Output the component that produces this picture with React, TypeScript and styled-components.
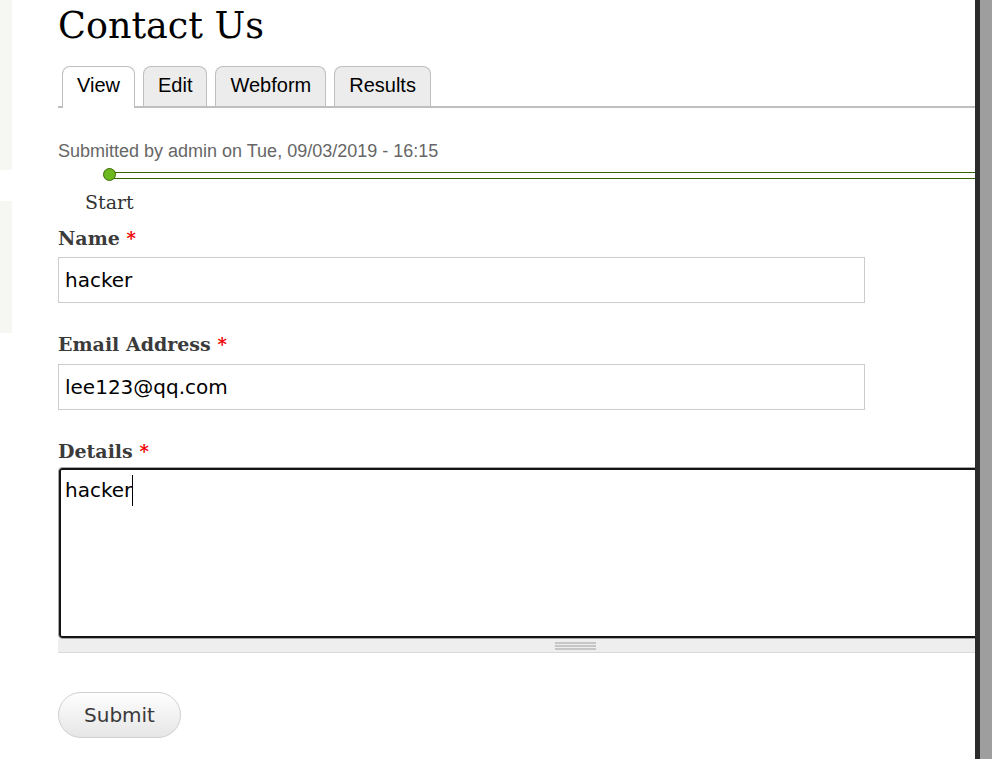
import styled, { createGlobalStyle } from "styled-components";

const GlobalStyle = createGlobalStyle`
  html, body {
    margin: 0;
    padding: 0;
    background: #fff;
    overflow: hidden;
  }
`;

const serif = `"DejaVu Serif", "Liberation Serif", serif`;
const sans = `"DejaVu Sans", "Noto Sans", sans-serif`;
const arial = `"Liberation Sans", Arial, sans-serif`;

const Root = styled.div`
  display: flex;
  height: 759px;
  overflow: hidden;
`;

const LeftRail = styled.aside`
  width: 12px;
  flex-shrink: 0;
  display: flex;
  flex-direction: column;
`;

const RailPanel = styled.div<{ $height: number; $offset?: number }>`
  height: ${({ $height }) => $height}px;
  margin-top: ${({ $offset = 0 }) => $offset}px;
  background: #f6f6f2;
`;

const Main = styled.main`
  flex: 1;
  min-width: 0;
  padding-left: 46px;
  overflow: hidden;
`;

const RightEdge = styled.div`
  display: flex;
  flex-shrink: 0;
`;

const EdgeDark = styled.div`
  width: 5px;
  background: #2b2b2b;
`;

const EdgeLight = styled.div`
  width: 12px;
  background: #9e9e9e;
`;

const Title = styled.h1`
  margin: 4px 0 0;
  font-family: ${serif};
  font-weight: normal;
  font-size: 36.5px;
  line-height: 44px;
  color: #000;
`;

const TabList = styled.ul`
  display: flex;
  align-items: flex-end;
  margin: 18px 0 0;
  padding: 0;
  list-style: none;
  border-bottom: 2px solid #bfbfbf;
`;

const Tab = styled.li<{ $active?: boolean }>`
  margin: 0 4px ${({ $active }) => ($active ? "-2px" : "0")};
  padding: 7px 14px ${({ $active }) => ($active ? "12px" : "10px")};
  border: 1px solid #bfbfbf;
  border-bottom: none;
  border-radius: 8px 8px 0 0;
  background: ${({ $active }) => ($active ? "#fff" : "#ececec")};
  font-family: ${arial};
  font-size: 20px;
  line-height: 22px;
  color: #000;
`;

const Submitted = styled.div`
  margin-top: 31px;
  font-family: ${arial};
  font-size: 18px;
  line-height: 24px;
  color: #666;
`;

const Progress = styled.div`
  position: relative;
  box-sizing: border-box;
  height: 13px;
  margin-top: 5px;
  padding: 4px 0 0 52px;
`;

const ProgressBar = styled.div`
  height: 5px;
  border-top: 1px solid #336600;
  border-bottom: 1px solid #336600;
  background: #fff;
`;

const ProgressDot = styled.span`
  position: absolute;
  top: 0;
  left: 45px;
  width: 11px;
  height: 11px;
  border: 1px solid #3a6b00;
  border-radius: 50%;
  background: #6cb81f;
`;

const StepLabel = styled.div`
  margin: 9px 0 0 27px;
  font-family: ${serif};
  font-size: 19px;
  line-height: 24px;
  color: #333;
`;

const Form = styled.form`
  margin-top: 12px;
`;

const Field = styled.div`
  margin-bottom: 29px;
`;

const Label = styled.label<{ $gap: number }>`
  display: block;
  margin-bottom: ${({ $gap }) => $gap}px;
  font-family: ${serif};
  font-weight: bold;
  font-size: 19px;
  line-height: 24px;
  color: #3b3b3b;
`;

const Required = styled.span`
  color: #ee0000;
  font-size: 18px;
`;

const TextInput = styled.input`
  display: block;
  box-sizing: border-box;
  width: 807px;
  height: 46px;
  margin: 0;
  padding: 0 6px;
  border: 1px solid #cccccc;
  border-radius: 0;
  outline: none;
  background: #fff;
  font-family: ${sans};
  font-size: 20px;
  color: #000;
`;

const TextareaWrap = styled.div`
  width: 1035px;
`;

const TextareaBox = styled.div`
  box-sizing: border-box;
  height: 172px;
  padding: 7px 6px;
  border: 1px solid #a8a8a8;
  border-radius: 4px;
  box-shadow: inset 0 0 0 2px #141414;
  font-family: ${sans};
  font-size: 20px;
  color: #000;
`;

const Caret = styled.span`
  display: inline-block;
  width: 1px;
  height: 31px;
  vertical-align: -9px;
  background: #000;
`;

const Grippie = styled.div`
  height: 13px;
  border-bottom: 1px solid #dadada;
  background: #eeeeee;
  display: flex;
  justify-content: center;
`;

const GrippieHandle = styled.span`
  width: 41px;
  height: 8px;
  margin-top: 3px;
  background: repeating-linear-gradient(to bottom, #c6c6c6 0 2px, transparent 2px 3px);
`;

const SubmitButton = styled.button`
  display: block;
  width: 123px;
  height: 46px;
  margin-top: 39px;
  padding: 0;
  border: 1px solid #cfcfcf;
  border-radius: 23px;
  background: linear-gradient(to bottom, #fefefe, #e6e6e6);
  font-family: ${sans};
  font-size: 20px;
  color: #3a3a3a;
  cursor: pointer;
`;

const tabs = ["View", "Edit", "Webform", "Results"];

export default function App() {
  return (
    <Root>
      <GlobalStyle />
      <LeftRail>
        <RailPanel $height={170} />
        <RailPanel $height={132} $offset={31} />
      </LeftRail>

      <Main>
        <Title>Contact Us</Title>

        <TabList>
          {tabs.map((t, i) => (
            <Tab key={t} $active={i === 0}>
              {t}
            </Tab>
          ))}
        </TabList>

        <Submitted>Submitted by admin on Tue, 09/03/2019 - 16:15</Submitted>

        <Progress>
          <ProgressBar />
          <ProgressDot />
        </Progress>
        <StepLabel>Start</StepLabel>

        <Form onSubmit={(e) => e.preventDefault()}>
          <Field>
            <Label $gap={6}>
              Name <Required>*</Required>
            </Label>
            <TextInput defaultValue="hacker" readOnly />
          </Field>
          <Field>
            <Label $gap={7}>
              Email Address <Required>*</Required>
            </Label>
            <TextInput defaultValue="lee123@qq.com" readOnly />
          </Field>
          <Field>
            <Label $gap={3}>
              Details <Required>*</Required>
            </Label>
            <TextareaWrap>
              <TextareaBox>
                hacker
                <Caret />
              </TextareaBox>
              <Grippie>
                <GrippieHandle />
              </Grippie>
            </TextareaWrap>
          </Field>
          <SubmitButton type="submit">Submit</SubmitButton>
        </Form>
      </Main>

      <RightEdge>
        <EdgeDark />
        <EdgeLight />
      </RightEdge>
    </Root>
  );
}
